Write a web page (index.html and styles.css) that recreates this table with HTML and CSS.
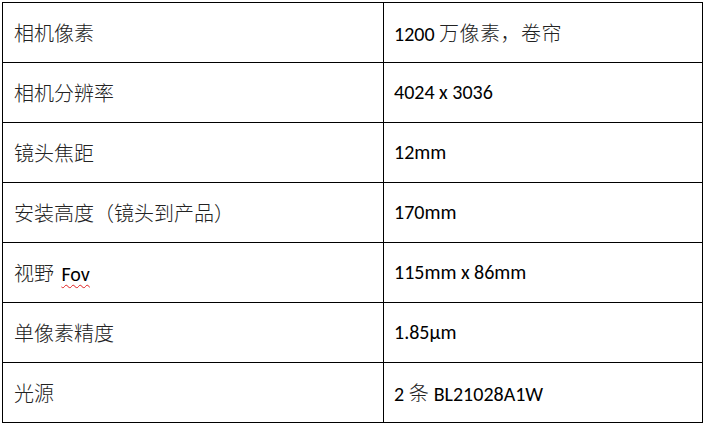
FILE: index.html
```html
<!DOCTYPE html>
<html lang="zh">
<head>
<meta charset="utf-8">
<link rel="stylesheet" href="styles.css">
</head>
<body>
<table class="spec">
  <tr><td class="k">相机像素</td><td class="v">1200 <span class="cjk">万像素，卷帘</span></td></tr>
  <tr><td class="k">相机分辨率</td><td class="v">4024 x 3036</td></tr>
  <tr><td class="k">镜头焦距</td><td class="v">12mm</td></tr>
  <tr><td class="k">安装高度（镜头到产品）</td><td class="v">170mm</td></tr>
  <tr><td class="k">视野 <span class="spell">Fov</span></td><td class="v">115mm x 86mm</td></tr>
  <tr><td class="k">单像素精度</td><td class="v">1.85μm</td></tr>
  <tr><td class="k">光源</td><td class="v">2 <span class="cjk">条</span> BL21028A1W</td></tr>
</table>
</body>
</html>
```

FILE: styles.css
```css
html, body {
  margin: 0;
  padding: 0;
  background: #ffffff;
}
body {
  padding: 2px 0 0 2px;
}
.spec {
  border-collapse: collapse;
  width: 701px;
  table-layout: fixed;
  font-family: Carlito, "Open Sans", "Noto Sans CJK SC", sans-serif;
  font-size: 20px;
  color: #000;
}
.spec td {
  border: 1px solid #000;
  height: 60px;
  padding: 0 0 1px 11px;
  vertical-align: middle;
  box-sizing: border-box;
}
.spec .k {
  width: 381px;
  font-family: "Noto Sans CJK SC", sans-serif;
  font-size: 20px;
  font-weight: 300;
  color: #222;
}
.spec .v {
  padding-left: 10px;
}
.cjk {
  font-family: "Noto Sans CJK SC", sans-serif;
  font-weight: 300;
  color: #222;
  letter-spacing: 0.5px;
}
.spell {
  font-family: Carlito, "Open Sans", sans-serif;
  font-size: 20px;
  font-weight: 400;
  color: #000;
  margin-left: 3px;
  text-decoration: underline wavy #e02020;
  text-decoration-thickness: 1px;
  text-underline-offset: 3px;
}
```
